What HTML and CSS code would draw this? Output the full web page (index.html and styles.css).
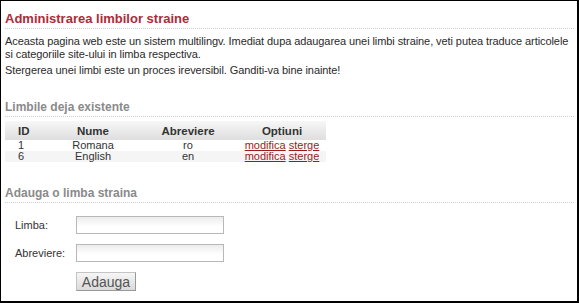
FILE: index.html
```html
<!DOCTYPE html>
<html>
<head>
<meta charset="utf-8">
<link rel="stylesheet" href="styles.css">
</head>
<body>
<div class="frame">
  <h1 class="title">Administrarea limbilor straine</h1>
  <p class="text">Aceasta pagina web este un sistem multilingv. Imediat dupa adaugarea unei limbi straine, veti putea traduce articolele si categoriile site-ului in limba respectiva.</p>
  <p class="text second">Stergerea unei limbi este un proces ireversibil. Ganditi-va bine inainte!</p>

  <h2 class="section">Limbile deja existente</h2>
  <table class="langs">
    <thead>
      <tr><th class="c-id">ID</th><th class="c-name">Nume</th><th class="c-abr">Abreviere</th><th class="c-opt">Optiuni</th></tr>
    </thead>
    <tbody>
      <tr><td class="c-id">1</td><td>Romana</td><td>ro</td><td><a href="#">modifica</a> <a href="#">sterge</a></td></tr>
      <tr class="alt"><td class="c-id">6</td><td>English</td><td>en</td><td><a href="#">modifica</a> <a href="#">sterge</a></td></tr>
    </tbody>
  </table>

  <h2 class="section add">Adauga o limba straina</h2>
  <form class="form">
    <div class="row"><label class="lbl">Limba:</label><input class="inp" type="text"></div>
    <div class="row"><label class="lbl">Abreviere:</label><input class="inp" type="text"></div>
    <div class="row"><span class="lbl"></span><button type="button" class="btn">Adauga</button></div>
  </form>
</div>
</body>
</html>
```
FILE: styles.css
```css
html, body { margin: 0; padding: 0; background: #fff; }
.frame {
  box-sizing: border-box;
  width: 579px;
  height: 303px;
  border-style: solid;
  border-color: #000;
  border-width: 1px 2px 2px 1px;
  padding: 0 3px 0 4px;
  font-family: "Liberation Sans", Arial, sans-serif;
  font-size: 11px;
  color: #2a2a2a;
  overflow: hidden;
}
.title {
  margin: 9px 0 0 0;
  font-size: 13px;
  font-weight: bold;
  color: #b02a37;
  line-height: 17px;
  padding-bottom: 1px;
  border-bottom: 1px dotted #cfcfcf;
}
.text { margin: 6px 0 0 0; line-height: 13px; letter-spacing: -0.08px; }
.text.second { margin-top: 3px; }
.section {
  margin: 23px 0 0 0;
  font-size: 12px;
  font-weight: bold;
  color: #8a8a8a;
  line-height: 15px;
  padding-bottom: 1px;
  border-bottom: 1px dotted #cfcfcf;
}
.section.add { margin-top: 24px; }
.langs {
  margin-top: 4px;
  width: 321px;
  border-collapse: collapse;
  font-size: 11px;
}
.langs th {
  height: 19px;
  padding: 0;
  font-weight: bold;
  font-size: 11.5px;
  color: #333;
  background: linear-gradient(#f7f7f7, #dedede);
  text-align: center;
}
.langs td { padding: 0; height: 11px; line-height: 11px; text-align: center; color: #333; }
.langs tr.alt td { background: #f5f5f5; }
.langs .c-id { text-align: left; padding-left: 13px; width: 30px; }
.langs .c-name { width: 90px; }
.langs .c-abr { width: 100px; }
.langs a { color: #9b1b1b; text-decoration: underline; }
.form { margin-top: 13px; display: flex; flex-direction: column; gap: 10px; padding-left: 10px; }
.row { display: flex; align-items: center; }
.lbl { width: 61px; color: #333; }
.inp {
  box-sizing: border-box;
  width: 148px; height: 18px;
  margin: 0; padding: 1px 3px;
  border: 1px solid #b8b8b8;
  background: linear-gradient(#ececec, #fff 60%);
  font: 11px "Liberation Sans", Arial, sans-serif;
}
.btn {
  box-sizing: border-box;
  width: 60px; height: 19px;
  margin: 0; padding: 0;
  border: 1px solid #c4c4c4;
  border-right-color: #999; border-bottom-color: #999;
  background: linear-gradient(#f6f6f6, #dadada);
  font: 14px "Liberation Sans", Arial, sans-serif;
  color: #555;
}
```
